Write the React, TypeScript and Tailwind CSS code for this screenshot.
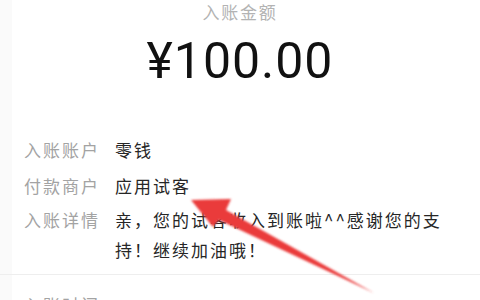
import React from "react";

const cjk = { fontFamily: '"Noto Sans CJK SC", "Noto Sans", sans-serif' };

function Row({ label, children }: { label: string; children?: React.ReactNode }) {
  return (
    <div className="flex text-[17px] leading-[30px] tracking-[2px]">
      <div className="w-[91px] shrink-0 text-[#a3a3a3]">{label}</div>
      <div className="flex-1 text-[#262626] pr-[10px]">{children}</div>
    </div>
  );
}

export default function App() {
  return (
    <div className="relative w-[480px] h-[300px] overflow-hidden bg-white" style={cjk}>
      <div className="flex h-full">
        <div className="w-[12px] shrink-0 bg-[#fafafa]" />
        <div className="flex-1 flex flex-col">
          <div className="pt-px text-center text-[17px] leading-[22px] tracking-[1.8px] text-[#b3b3b3] pr-[12px]">
            入账金额
          </div>
          <div
            className="mt-[8px] text-center text-[50px] leading-[60px] tracking-[1px] text-[#111] pr-[12px]"
            style={{ fontFamily: 'Roboto, "Noto Sans", sans-serif' }}
          >
            ¥100.00
          </div>
          <div className="mt-[17px] ml-[12px] mr-[14px] h-px bg-[#ececec]" />
          <div className="pl-[12px] pt-[27px] flex flex-col pb-[9px]">
            <Row label="入账账户">零钱</Row>
            <div className="mt-[6px]">
              <Row label="付款商户">应用试客</Row>
            </div>
            <div className="mt-[4px]">
              <Row label="入账详情">亲，您的试客收入到账啦^^感谢您的支持！继续加油哦！</Row>
            </div>
          </div>
          <div className="h-[8px] border-t border-[#eeeeee] bg-[#f8f8f8] -ml-[12px]" />
          <div className="pl-[12px] pt-[15px]">
            <Row label="入账时间" />
          </div>
        </div>
      </div>
      <svg className="absolute left-0 top-0" width="480" height="300" viewBox="0 0 480 300">
        <defs>
          <filter id="b" x="-10%" y="-10%" width="120%" height="120%">
            <feGaussianBlur stdDeviation="0.8" />
          </filter>
        </defs>
        <polygon
          points="191,200 231,199 226,210 374,293 219,220 213,227"
          fill="#ea3b3b"
          filter="url(#b)"
        />
      </svg>
    </div>
  );
}
